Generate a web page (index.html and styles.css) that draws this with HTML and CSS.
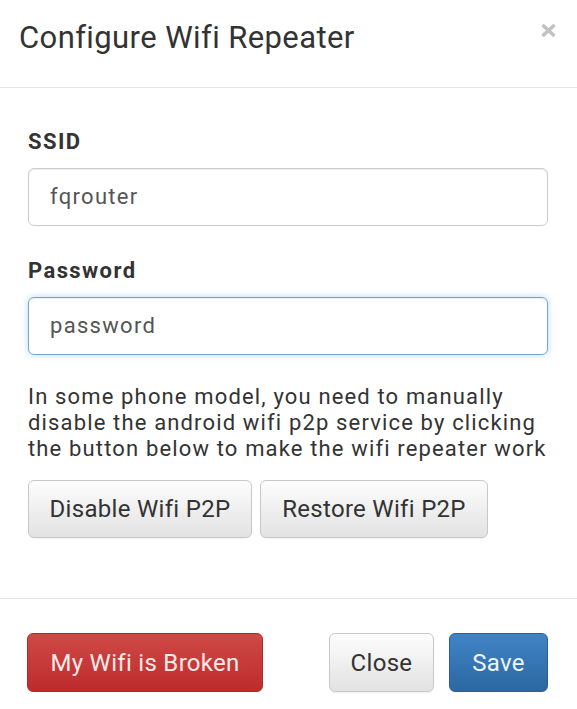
FILE: index.html
```html
<!DOCTYPE html>
<html>
<head>
<meta charset="utf-8">
<title>Configure Wifi Repeater</title>
<link rel="stylesheet" href="styles.css">
</head>
<body>
<div class="modal">
  <div class="modal-header">
    <h3 class="modal-title">Configure Wifi Repeater</h3>
    <button class="close" aria-label="Close">
      <svg width="17" height="15" viewBox="0 0 17 15"><path d="M2.5 2 L14.5 13 M14.5 2 L2.5 13" stroke="#c2c2c2" stroke-width="3.6" stroke-linecap="butt"/></svg>
    </button>
  </div>
  <div class="modal-body">
    <div class="form-group">
      <label class="label">SSID</label>
      <div class="input">fqrouter</div>
    </div>
    <div class="form-group">
      <label class="label">Password</label>
      <div class="input focus">password</div>
    </div>
    <p class="note">In some phone model, you need to manually disable the android wifi p2p service by clicking the button below to make the wifi repeater work</p>
    <div class="btn-row">
      <button class="btn btn-default btn-p2p-a">Disable Wifi P2P</button>
      <button class="btn btn-default btn-p2p-b">Restore Wifi P2P</button>
    </div>
  </div>
  <div class="modal-footer">
    <button class="btn btn-danger">My Wifi is Broken</button>
    <div class="footer-right">
      <button class="btn btn-default btn-close">Close</button>
      <button class="btn btn-primary">Save</button>
    </div>
  </div>
</div>
</body>
</html>
```

FILE: styles.css
```css
html, body {
  margin: 0;
  padding: 0;
  background: #fff;
}
body {
  font-family: Roboto, "Liberation Sans", sans-serif;
  color: #333;
  width: 577px;
  height: 709px;
  overflow: hidden;
}
.modal {
  width: 577px;
}
.modal-header {
  box-sizing: border-box;
  border-bottom: 1px solid #e5e5e5;
  height: 88px;
  padding: 20.4px 20px 0 19px;
  display: flex;
  align-items: flex-start;
}
.modal-title {
  margin: 0;
  font-size: 31px;
  line-height: 36px;
  font-weight: 400;
  letter-spacing: 0.4px;
  color: #333;
}
.close {
  margin-left: auto;
  margin-top: 2.6px;
  padding: 0;
  border: 0;
  background: none;
  width: 17px;
  height: 15px;
  display: block;
}
.close svg {
  display: block;
}
.modal-body {
  padding: 40.5px 29px 0 28px;
  height: 511px;
  box-sizing: border-box;
  border-bottom: 1px solid #e5e5e5;
}
.form-group {
  margin-bottom: 32.5px;
}
.label {
  display: block;
  font-size: 22px;
  line-height: 26px;
  font-weight: 700;
  letter-spacing: 1.4px;
  color: #333;
  margin-bottom: 13px;
}
.input {
  height: 58px;
  box-sizing: border-box;
  border: 1px solid #ccc;
  border-radius: 6px;
  padding: 0 21px;
  font-size: 22px;
  line-height: 56px;
  letter-spacing: 1.3px;
  color: #555;
  box-shadow: inset 0 1px 1px rgba(0,0,0,0.075);
}
.input.focus {
  border-color: #78a5c8;
  box-shadow: inset 0 1px 1px rgba(0,0,0,0.075), 0 0 6px rgba(102,175,233,0.5);
}
.form-group + .note {
  margin-top: -4px;
}
.note {
  margin: 0;
  font-size: 22px;
  line-height: 26px;
  letter-spacing: 1.15px;
  color: #333;
}
.btn-row {
  display: flex;
  gap: 8px;
  margin-top: 18px;
}
.btn {
  font-family: Roboto, "Liberation Sans", sans-serif;
  font-size: 24px;
  letter-spacing: 0.3px;
  box-sizing: border-box;
  border-radius: 6px;
  border: 1px solid #ccc;
  padding: 0 20px;
  cursor: pointer;
  display: flex;
  align-items: center;
  justify-content: center;
  white-space: nowrap;
}
.btn-default {
  color: #333;
  background: linear-gradient(to bottom, #fdfdfd 0%, #e2e2e2 100%);
  border-color: #c8c8c8;
  box-shadow: inset 0 1px 0 rgba(255,255,255,0.2), 0 1px 1px rgba(0,0,0,0.06);
}
.btn-p2p-a {
  width: 224px;
  height: 58px;
}
.btn-p2p-b {
  width: 228px;
  height: 58px;
}
.modal-footer {
  display: flex;
  align-items: flex-start;
  padding: 34px 29px 0 27px;
}
.footer-right {
  margin-left: auto;
  display: flex;
  gap: 15px;
}
.btn-danger {
  width: 236px;
  height: 59px;
  color: #fbe9e9;
  background: linear-gradient(to bottom, #cf4a47 0%, #bd2b2b 100%);
  border-color: #b12a27;
}
.btn-close {
  width: 105px;
  height: 59px;
}
.btn-primary {
  width: 99px;
  height: 59px;
  color: #eef4fb;
  background: linear-gradient(to bottom, #4183c4 0%, #2b68a3 100%);
  border-color: #2a6294;
}
```
